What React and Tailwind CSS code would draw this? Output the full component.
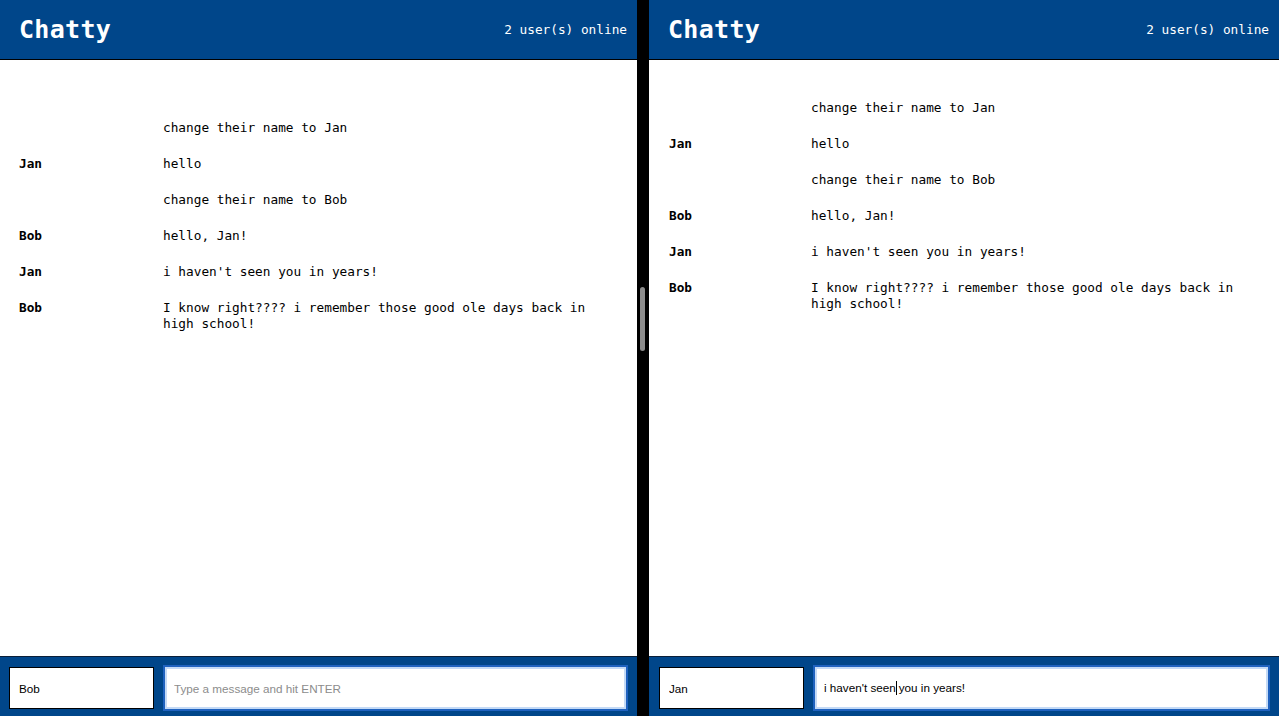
import React from 'react';

const mono = "font-['DejaVu_Sans_Mono',monospace]";
const sans = "font-['Liberation_Sans',Arial,sans-serif]";

const leftMessages = [
  { user: '', text: 'change their name to Jan' },
  { user: 'Jan', text: 'hello' },
  { user: '', text: 'change their name to Bob' },
  { user: 'Bob', text: 'hello, Jan!' },
  { user: 'Jan', text: "i haven't seen you in years!" },
  { user: 'Bob', text: 'I know right???? i remember those good ole days back in high school!' },
];

function Header() {
  return (
    <header className="h-[60px] shrink-0 bg-[#00468a] border-b border-black flex items-center justify-between pl-[19px] pr-[10px]">
      <h1 className={`${mono} text-[25px] font-bold text-white leading-none tracking-[0.3px]`}>Chatty</h1>
      <span className={`${mono} text-[12.75px] text-white`}>2 user(s) online</span>
    </header>
  );
}

function MessageList({ messages, top, nameWidth }) {
  return (
    <main className={`flex-1 bg-white ${top} pl-[19px] pr-[40px] overflow-hidden`}>
      {messages.map((m, i) => (
        <div key={i} className={`flex py-[10px] ${mono} text-[12.75px] leading-[16px] text-black`}>
          <span className={`${nameWidth} shrink-0 font-bold`}>{m.user}</span>
          <span className="flex-1">{m.text}</span>
        </div>
      ))}
    </main>
  );
}

function Footer({ name, children, pl }) {
  return (
    <footer className={`h-[60px] shrink-0 bg-[#00468a] border-t border-[#0b1f38] flex items-start gap-[11px] pt-[10px] ${pl} pr-[11px]`}>
      <input
        readOnly
        defaultValue={name}
        className={`w-[145px] h-[42px] shrink-0 bg-white border border-black px-[9px] ${sans} text-[11.7px] text-black outline-none`}
      />
      {children}
    </footer>
  );
}

export default function App() {
  return (
    <div className="flex h-screen w-full overflow-hidden bg-black">
      {/* left window */}
      <section className="w-[637px] shrink-0 flex flex-col">
        <Header />
        <MessageList messages={leftMessages} top="pt-[50px]" nameWidth="w-[144px]" />
        <Footer name="Bob" pl="pl-[9px]">
          <input
            readOnly
            placeholder="Type a message and hit ENTER"
            className={`flex-1 h-[42px] bg-white border-2 border-[#c4daf6] shadow-[0_0_0_2px_#1f62bf] px-[7px] ${sans} text-[11.7px] placeholder:text-[#8c8c8c] outline-none`}
          />
        </Footer>
      </section>

      {/* divider with scrollbar thumb */}
      <div className="w-[12px] shrink-0 bg-black pt-[287px] pl-[3px]">
        <div className="w-[5px] h-[64px] rounded-full bg-[#8c8c8c]" />
      </div>

      {/* right window */}
      <section className="flex-1 flex flex-col">
        <Header />
        <MessageList messages={leftMessages} top="pt-[30px] pl-[20px]" nameWidth="w-[142px]" />
        <Footer name="Jan" pl="pl-[10px]">
          <div className={`flex-1 h-[42px] bg-white border-2 border-[#c4daf6] shadow-[0_0_0_2px_#1f62bf] px-[7px] flex items-center ${sans} text-[11.7px] text-black`}>
            <span>i haven't seen</span>
            <span className="inline-block w-px h-[14px] bg-black mr-[2px]" />
            <span>you in years!</span>
          </div>
        </Footer>
      </section>
    </div>
  );
}
